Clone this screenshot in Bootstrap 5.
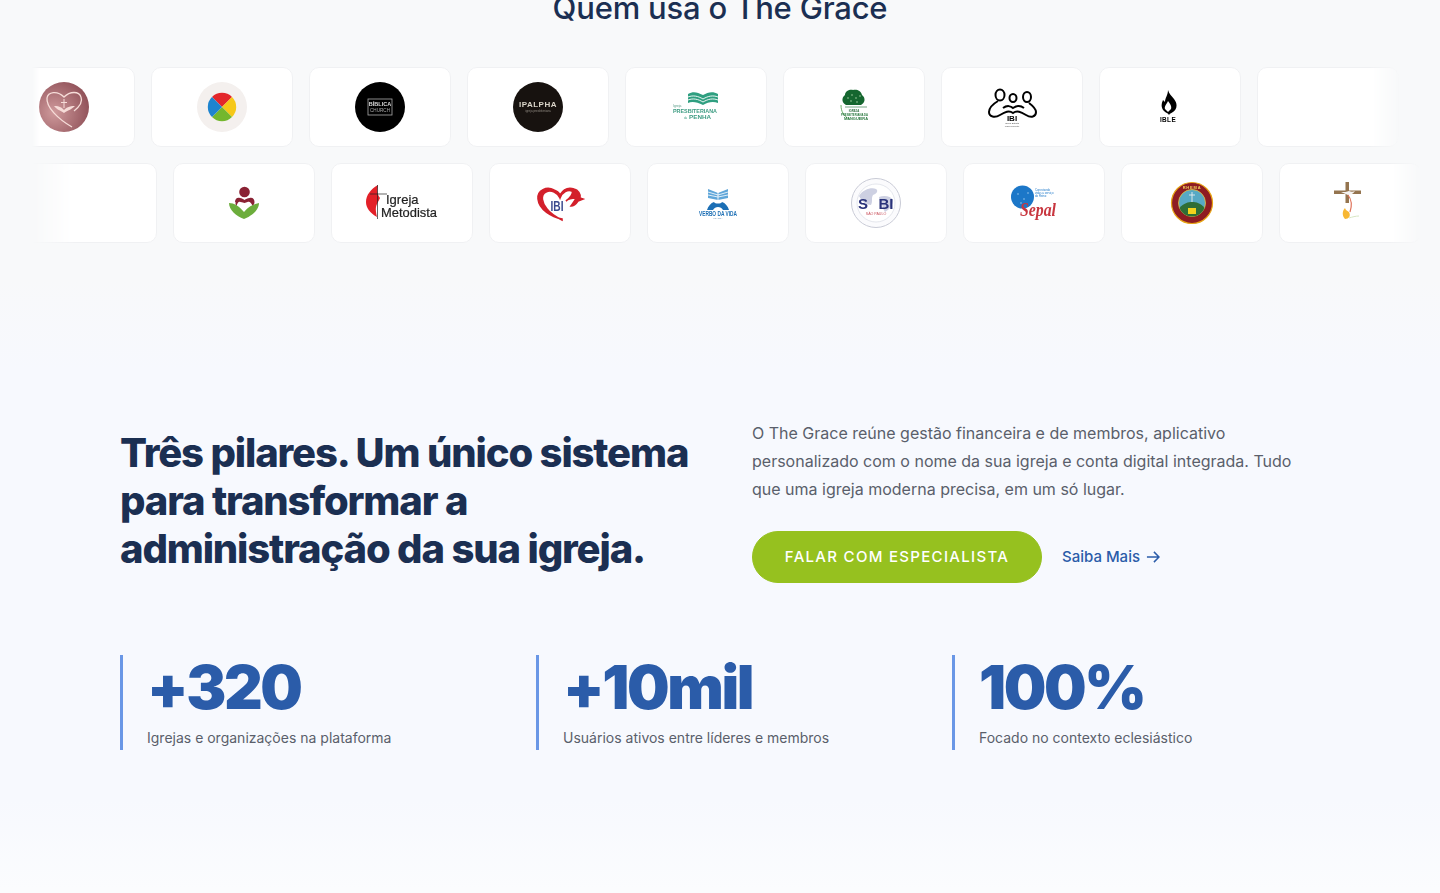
<!DOCTYPE html>
<html lang="pt-BR">

<head>
    <meta charset="utf-8">
    <meta name="viewport" content="width=device-width, initial-scale=1">
    <title>The Grace</title>

    <!-- Bootstrap CSS -->
    <link href="https://cdn.jsdelivr.net/npm/bootstrap@5.3.3/dist/css/bootstrap.min.css" rel="stylesheet">
    <style>
        body {
            font-family: "Inter", "Noto Sans", sans-serif;
            background: #f9fbfe;
            overflow: hidden;
        }

        .clientes {
            background: #f8f9fa;
            height: 290px;
            margin-top: -10px;
        }

        .clientes h2 {
            color: #1b2f52;
            font-size: 31px;
            line-height: 36px;
            font-weight: 500;
            letter-spacing: -.2px;
            margin-bottom: 41px;
        }

        .faixa {
            overflow: hidden;
        }

        .faixa-linha {
            width: 1500px;
            margin-bottom: 16px;
        }

        .faixa-a {
            margin-left: -7px;
            -webkit-mask-image: linear-gradient(90deg, transparent 39px, #000 47px, #000 1377px, transparent 1407px);
            mask-image: linear-gradient(90deg, transparent 39px, #000 47px, #000 1377px, transparent 1407px);
        }

        .faixa-b {
            margin-left: 15px;
            -webkit-mask-image: linear-gradient(90deg, transparent 17px, #000 60px, #000 1375px, transparent 1405px);
            mask-image: linear-gradient(90deg, transparent 17px, #000 60px, #000 1375px, transparent 1405px);
        }

        .logo-box {
            width: 142px;
            height: 80px;
            flex: none;
            background: #fff;
            border: 1px solid #f0f1f3;
            border-radius: 10px;
        }

        .logo-box svg {
            filter: blur(.4px);
        }

        .logo-box text {
            font-family: "Liberation Sans", sans-serif;
        }

        .pilares {
            background: linear-gradient(#f8f9fa 0, #f7f9fe 90px, #f7f9fe 520px, #fbfcfe 610px);
            height: 613px;
            padding-top: 139px;
        }

        .miolo {
            width: 1200px;
            margin: 0 auto;
        }

        .intro {
            --bs-gutter-x: 64px;
            margin-bottom: 72px;
        }

        .intro h1 {
            color: #1b2f52;
            font-size: 40px;
            line-height: 48px;
            font-weight: 800;
            letter-spacing: -1.15px;
            white-space: nowrap;
            margin: 0;
        }

        .intro p {
            color: #5a5f6b;
            font-size: 16px;
            line-height: 28px;
            margin-bottom: 28px;
        }

        .btn-falar {
            --bs-btn-color: #fff;
            --bs-btn-bg: #96c11f;
            --bs-btn-border-color: #96c11f;
            --bs-btn-hover-color: #fff;
            --bs-btn-hover-bg: #86ad1b;
            --bs-btn-hover-border-color: #86ad1b;
            width: 290px;
            height: 52px;
            line-height: 50px;
            padding: 0;
            border-radius: 26px;
            font-size: 15px;
            font-weight: 500;
            letter-spacing: 1.3px;
        }

        .saiba {
            color: #2b5ca9;
            font-size: 15px;
            font-weight: 500;
            text-decoration: none;
            gap: 6px;
        }

        .numeros {
            --bs-gutter-x: 48px;
        }

        .numero-box {
            border-left: 3px solid #6a97e6;
            padding-left: 24px;
            height: 95px;
        }

        .numero-box strong {
            display: block;
            color: #2b5ca9;
            font-size: 60px;
            line-height: 65px;
            font-weight: 900;
            letter-spacing: -2.4px;
            margin-bottom: 5px;
        }

        .numero-box span {
            color: #5a5f6b;
            font-size: 14px;
            line-height: 22px;
        }
    </style>
</head>

<body>
    <!-- Quem usa -->
    <section class="clientes">
        <h2 class="text-center">Quem usa o The Grace</h2>
        <div class="faixa">
            <div class="faixa-linha faixa-a d-flex gap-3">
                <div class="logo-box d-flex align-items-center justify-content-center">
                    <svg width="100" height="60" viewBox="0 0 100 60">
                        <defs>
                            <radialGradient id="rosa" cx=".3" cy=".6" r=".8">
                                <stop offset="0" stop-color="#cf9a9c"/>
                                <stop offset="1" stop-color="#8a4a52"/>
                            </radialGradient>
                        </defs>
                        <circle cx="50" cy="30" r="25" fill="url(#rosa)"/>
                        <path d="M58 50C44 42 32 30 33 21c1-6 10-8 17-1 6-6 15-6 17 0 2 5-2 10-7 14" fill="none" stroke="#f6dcd8" stroke-width="1.3"/>
                        <path d="M40 29c6 0 8 2 10 4 2-2 5-4 11-4-4 4-7 4-11 7-4-3-7-3-10-7zM49.5 22h1v9h-1zM47 25h6v1h-6z" fill="#f6dcd8"/>
                    </svg>
                </div>
                <div class="logo-box d-flex align-items-center justify-content-center">
                    <svg width="100" height="60" viewBox="0 0 100 60">
                        <circle cx="50" cy="30" r="25" fill="#f4f0ee"/>
                        <path d="M50 30 40 20A14 14 0 0 1 60 20z" fill="#e3262b"/>
                        <path d="M50 30 60 20A14 14 0 0 1 60 40z" fill="#f6c818"/>
                        <path d="M50 30 60 40A14 14 0 0 1 40 40z" fill="#74b72e"/>
                        <path d="M50 30 40 40A14 14 0 0 1 40 20z" fill="#1e84cf"/>
                    </svg>
                </div>
                <div class="logo-box d-flex align-items-center justify-content-center">
                    <svg width="100" height="60" viewBox="0 0 100 60">
                        <circle cx="50" cy="30" r="25" fill="#000"/>
                        <rect x="38" y="22" width="24" height="16" fill="none" stroke="#aaa" stroke-width=".8"/>
                        <text x="50" y="29" font-size="5.5" font-weight="700" fill="#ddd" text-anchor="middle">BÍBLICA</text>
                        <text x="50" y="35" font-size="4.6" fill="#aaa" text-anchor="middle">CHURCH</text>
                    </svg>
                </div>
                <div class="logo-box d-flex align-items-center justify-content-center">
                    <svg width="100" height="60" viewBox="0 0 100 60">
                        <circle cx="50" cy="30" r="25" fill="#17120f"/>
                        <text x="50" y="30" font-size="8" font-weight="700" fill="#d9d4c8" text-anchor="middle" letter-spacing=".5">IPALPHA</text>
                        <text x="50" y="35" font-size="3" fill="#8f8a80" text-anchor="middle">igreja presbiteriana</text>
                    </svg>
                </div>
                <div class="logo-box d-flex align-items-center justify-content-center">
                    <svg width="100" height="60" viewBox="0 0 100 60">
                        <path d="M42 17c5-3 9-2 15 1 5-3 10-4 15-1v9c-5-2-10-1-15 2-6-3-11-4-15-2z" fill="#2f9f80"/>
                        <path d="M42 20c5-2 10-1 15 2 5-3 10-4 15-2M42 23c5-2 10-1 15 2 5-3 10-4 15-2" fill="none" stroke="#fff" stroke-width=".9"/>
                        <text x="27" y="30" font-size="3.4" fill="#5b9c88">Igreja</text>
                        <text x="27" y="36" font-size="5" font-weight="700" fill="#3d9c82" textLength="44" lengthAdjust="spacingAndGlyphs">PRESBITERIANA</text>
                        <text x="38" y="42" font-size="2.8" fill="#3d9c82">da</text>
                        <text x="43" y="42" font-size="5.4" font-weight="700" fill="#3d9c82" textLength="22" lengthAdjust="spacingAndGlyphs">PENHA</text>
                    </svg>
                </div>
                <div class="logo-box d-flex align-items-center justify-content-center">
                    <svg width="100" height="60" viewBox="0 0 100 60">
                        <path d="M42 28c-4-2-5-7-1-10 0-5 6-6 8-5 3-1 8 0 9 5 4 3 3 8-1 10z" fill="#15662f"/>
                        <g fill="#bfe2b8"><circle cx="44" cy="21" r=".7"/><circle cx="48" cy="18" r=".7"/><circle cx="52" cy="21" r=".7"/><circle cx="56" cy="19" r=".7"/><circle cx="47" cy="24" r=".7"/><circle cx="53" cy="25" r=".7"/></g>
                        <path d="M37 28c0 7 3 11 8 14" fill="none" stroke="#5fa75a" stroke-width=".9"/>
                        <path d="M41 30h22" stroke="#1c6b34" stroke-width=".6"/>
                        <text x="50" y="35" font-size="2.8" font-weight="700" fill="#2c6a3c" text-anchor="middle">IGREJA</text>
                        <text x="37" y="39" font-size="2.6" font-weight="700" fill="#2c7a40" textLength="27" lengthAdjust="spacingAndGlyphs">PRESBITERIANA DA</text>
                        <text x="40" y="43" font-size="2.6" font-weight="700" fill="#2c7a40" textLength="24" lengthAdjust="spacingAndGlyphs">MANGUEIRA</text>
                    </svg>
                </div>
                <div class="logo-box d-flex align-items-center justify-content-center">
                    <svg width="100" height="60" viewBox="0 0 100 60">
                        <g fill="none" stroke="#000" stroke-width="2">
                            <ellipse cx="38" cy="18" rx="4.500" ry="5.500"/>
                            <ellipse cx="51" cy="21" rx="3.500" ry="4"/>
                            <ellipse cx="65" cy="20" rx="4" ry="5"/>
                            <path d="M36 24C31 27 27 31 27 35c0 5 6 6 11 3 5-3 9-5 13-2 4-3 8-1 13 2 5 3 10 2 10-3 0-3-3-6-7-9"/>
                            <path d="M41 31c4-3 8-2 10 0 3-2 7-3 11 0"/>
                        </g>
                        <text x="50" y="44" font-size="8" font-weight="700" text-anchor="middle">IBI</text>
                        <text x="50" y="47" font-size="2.400" fill="#555" text-anchor="middle">Igreja Batista</text>
                        <text x="50" y="50" font-size="2.400" fill="#555" text-anchor="middle">Independente</text>
                    </svg>
                </div>
                <div class="logo-box d-flex align-items-center justify-content-center">
                    <svg width="100" height="60" viewBox="0 0 100 60">
                        <path d="M48 13c1 4 4 6 6 9 4 5 3 10-1 13-1 1-3 1-4 3-1-2-3-2-5-4-3-3-3-7-1-11l2 2c0-4 3-7 3-12z" fill="#000"/>
                        <path d="M48 24c2 3 4 5 3 8-1 1-2 2-3 3-1-1-2-2-3-3-1-3 2-5 3-8z" fill="#fff"/>
                        <text x="48" y="45" font-size="6.400" font-weight="700" text-anchor="middle" letter-spacing=".4">IBLE</text>
                    </svg>
                </div>
                <div class="logo-box"></div>
            </div>
            <div class="faixa-linha faixa-b d-flex gap-3">
                <div class="logo-box"></div>
                <div class="logo-box d-flex align-items-center justify-content-center">
                    <svg width="100" height="60" viewBox="0 0 100 60">
                        <circle cx="50.5" cy="19" r="5.3" fill="#8a2234"/>
                        <path d="M41 29c0-4 3-5 5-4 2 0 3 1 4.500 2 1.500-1 3-2 5-2 3-1 5 1 5 4 0 2-1 3-2 4-1-3-3-5-5-4-1 0-2 1-3 1-1 0-2-1-4-1-2-1-3 1-4 4-1-1-1-2-1-4z" fill="#8a2234"/>
                        <path d="M35 30c5 0 10 3 15 9 4-5 9-8 15-9 0 7-7 13-15 16-8-3-15-9-15-16z" fill="#6cad3c"/>
                        <path d="M44 31c2-1 5 0 6 2 1-2 4-3 6-2-1 3-4 5-6 7-2-2-5-4-6-7z" fill="#fff"/>
                    </svg>
                </div>
                <div class="logo-box d-flex align-items-center justify-content-center">
                    <svg width="100" height="60" viewBox="0 0 100 60">
                        <path d="M26 12c-7 4-12 10-12 17 0 6 4 11 11 15-1-5-2-9 0-13l3-6c-3-4-3-8-2-13z" fill="#e32028"/>
                        <path d="M25.500 12v34M18 21h17" stroke="#222" stroke-width=".7" fill="none"/>
                        <text x="34" y="31" font-size="13" fill="#222" stroke="#222" stroke-width=".2">Igreja</text>
                        <text x="29" y="44" font-size="13" fill="#222" stroke="#222" stroke-width=".2" textLength="56" lengthAdjust="spacingAndGlyphs">Metodista</text>
                    </svg>
                </div>
                <div class="logo-box d-flex align-items-center justify-content-center">
                    <svg width="100" height="60" viewBox="0 0 100 60">
                        <path d="M52 46C42 44 29 37 28 26c-1-9 9-13 16-9 3 1 5 3 6 5 3-5 8-8 14-6 4 1 7 5 6 9l3 1-5 2c-2 3-4 5-7 5 2-3 4-5 5-8-5 0-8 1-10 3 4-3 8-8 6-10-4-2-10 1-12 7-2-5-9-9-14-6-6 3-4 11 1 17 3 4 9 8 15 11z" fill="#d3202b" stroke="#d3202b" stroke-width="1.600"/>
                        <text x="47" y="38" font-size="14" font-weight="700" fill="#3a4a8e" text-anchor="middle" textLength="13" lengthAdjust="spacingAndGlyphs">IBI</text>
                    </svg>
                </div>
                <div class="logo-box d-flex align-items-center justify-content-center">
                    <svg width="100" height="60" viewBox="0 0 100 60">
                        <path d="M40 16l10 4 10-4v9l-10 2-10-2z" fill="#5fa6d9"/>
                        <path d="M40 19l10 3 10-3M40 22l10 2 10-2M50 16v11" stroke="#fff" stroke-width=".8" fill="none"/>
                        <path d="M39 37c1-4 4-7 7-8 1 2 7 2 8 0 3 1 6 4 7 8h-6c-1-2-3-3-5-3s-4 1-5 3z" fill="#1c6fb5"/>
                        <text x="50" y="42.500" font-size="6.400" font-weight="700" fill="#1c6fb5" text-anchor="middle" textLength="38" lengthAdjust="spacingAndGlyphs">VERBO DA VIDA</text>
                        <text x="50" y="46" font-size="2.200" fill="#6b93b5" text-anchor="middle">FRANCA</text>
                    </svg>
                </div>
                <div class="logo-box d-flex align-items-center justify-content-center">
                    <svg width="100" height="60" viewBox="0 0 100 60">
                        <circle cx="50" cy="30" r="24.500" fill="#fbfbfd" stroke="#c9cbd6" stroke-width="1"/>
                        <circle cx="50" cy="30" r="19" fill="#fff" stroke="#d4d6e0" stroke-width=".6"/>
                        <path d="M33 23c4-7 13-9 17-7 3 2 0 5-3 6-2 3 0 6-2 10-4 0-9-3-12-9zM53 24c5-2 12-1 14 3 0 5-4 10-8 12-2-3-3-6-3-9-2-1-3-4-3-6z" fill="#cdd0e2"/>
                        <text x="37" y="36" font-size="15" font-weight="700" fill="#29327a" text-anchor="middle">S</text>
                        <text x="60" y="36" font-size="15" font-weight="700" fill="#29327a" text-anchor="middle">BI</text>
                        <text x="50" y="42" font-size="3.600" fill="#c9515c" text-anchor="middle">SÃO PAULO</text>
                    </svg>
                </div>
                <div class="logo-box d-flex align-items-center justify-content-center">
                    <svg width="100" height="60" viewBox="0 0 100 60">
                        <circle cx="38.500" cy="24" r="11.500" fill="#1c77c8"/>
                        <g fill="#b4d8f4"><circle cx="34" cy="21" r=".7"/><circle cx="40" cy="26" r=".7"/><circle cx="44" cy="20" r=".7"/><circle cx="37" cy="30" r=".7"/></g>
                        <text x="51" y="18" font-size="2.800" fill="#1c77c8">Conectando</text>
                        <text x="51" y="21" font-size="2.800" fill="#1c77c8">vidas a serviço</text>
                        <text x="51" y="24" font-size="2.800" fill="#1c77c8">do Reino</text>
                        <text x="36" y="43" font-size="19" font-weight="700" font-style="italic" fill="#c8363f" textLength="36" lengthAdjust="spacingAndGlyphs" style="font-family:'Liberation Serif',serif">Sepal</text>
                    </svg>
                </div>
                <div class="logo-box d-flex align-items-center justify-content-center">
                    <svg width="100" height="60" viewBox="0 0 100 60">
                        <circle cx="50" cy="30" r="20.500" fill="#8e1c22" stroke="#e8a514" stroke-width="1.200"/>
                        <circle cx="50" cy="30" r="13.500" fill="#57a9c4" stroke="#e8c23a" stroke-width=".8"/>
                        <path d="M37.500 35c4-5 9-6 12.500-6 4 0 9 1 12.500 6-2 5-7 8.500-12.500 8.500s-10.500-3.500-12.500-8.500z" fill="#2f6e35"/>
                        <rect x="46" y="35" width="8" height="6" fill="#f2d21c"/>
                        <path d="M50 19v10M47 22h6" stroke="#e9eef0" stroke-width=".9"/>
                        <text x="50" y="16" font-size="4" font-weight="700" fill="#f3d35a" text-anchor="middle" letter-spacing=".8">RHEMA</text>
                    </svg>
                </div>
                <div class="logo-box d-flex align-items-center justify-content-center">
                    <svg width="100" height="60" viewBox="0 0 100 60">
                        <path d="M45.500 9H49v21h-3.500zM34 17.500h27V21H34z" fill="#94744f"/>
                        <path d="M41 19c3 0 6 0 8-1 2 1 4 1 6 0-2 3-5 4-7 4z" fill="#f5f3f2"/>
                        <path d="M48 22c4 5 4 11 2 17" fill="none" stroke="#e0745c" stroke-width="1.200"/>
                        <path d="M45 35c-3 3-3 8 0 11 4 0 6-3 4-7-1-1-3-1-4-4z" fill="#f7b733"/>
                        <path d="M49 45c3-1 7-2 10-2" stroke="#d7e6c4" stroke-width="1" fill="none"/>
                    </svg>
                </div>
            </div>
        </div>
    </section>

    <!-- Pilares -->
    <section class="pilares">
        <div class="miolo">
            <div class="row intro align-items-center">
                <div class="col-6">
                    <h1>Três pilares. Um único sistema<br>para transformar a<br>administração da sua igreja.</h1>
                </div>
                <div class="col-6">
                    <p>O The Grace reúne gestão financeira e de membros, aplicativo personalizado com o nome da sua igreja e conta digital integrada. Tudo que uma igreja moderna precisa, em um só lugar.</p>
                    <div class="d-flex align-items-center">
                        <a class="btn btn-falar" href="#">FALAR COM ESPECIALISTA</a>
                        <a class="saiba ms-3 ps-1 d-inline-flex align-items-center" href="#">Saiba Mais
                            <svg width="14" height="14" viewBox="0 0 15 14" fill="none" stroke="#2b5ca9" stroke-width="1.600">
                                <path d="M1 7h13M8.500 1.500 14 7l-5.500 5.500"/>
                            </svg>
                        </a>
                    </div>
                </div>
            </div>
            <div class="row numeros">
                <div class="col-4">
                    <div class="numero-box">
                        <strong>+320</strong>
                        <span>Igrejas e organizações na plataforma</span>
                    </div>
                </div>
                <div class="col-4">
                    <div class="numero-box">
                        <strong>+10mil</strong>
                        <span>Usuários ativos entre líderes e membros</span>
                    </div>
                </div>
                <div class="col-4">
                    <div class="numero-box">
                        <strong>100%</strong>
                        <span>Focado no contexto eclesiástico</span>
                    </div>
                </div>
            </div>
        </div>
    </section>

    <script src="https://cdn.jsdelivr.net/npm/bootstrap@5.3.3/dist/js/bootstrap.bundle.min.js"></script>
</body>

</html>
